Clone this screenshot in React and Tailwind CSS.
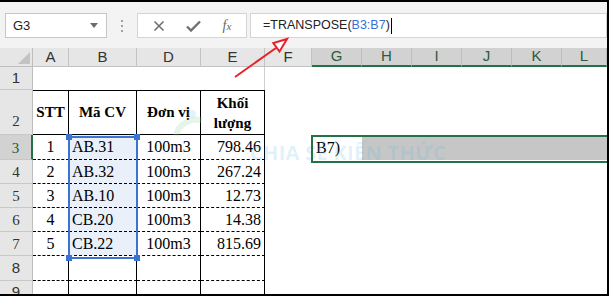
import React from "react";

const serif = { fontFamily: '"Liberation Serif", "Times New Roman", serif' };

const headerCols = [
  { l: "A", w: "w-[36px]" },
  { l: "B", w: "w-[68px]" },
  { l: "D", w: "w-[64px]" },
  { l: "E", w: "w-[64px]" },
  { l: "F", w: "w-[47px]" },
];
const selCols = [
  { l: "G", w: "w-[50px]" },
  { l: "H", w: "w-[50px]" },
  { l: "I", w: "w-[50px]" },
  { l: "J", w: "w-[50px]" },
  { l: "K", w: "w-[50px]" },
  { l: "L", w: "w-[45px]" },
];

const data = [
  { n: 3, stt: "1", ma: "AB.31", dv: "100m3", kl: "798.46", h: "h-[25px]" },
  { n: 4, stt: "2", ma: "AB.32", dv: "100m3", kl: "267.24", h: "h-[24px]" },
  { n: 5, stt: "3", ma: "AB.10", dv: "100m3", kl: "12.73", h: "h-[24px]" },
  { n: 6, stt: "4", ma: "CB.20", dv: "100m3", kl: "14.38", h: "h-[24px]" },
  { n: 7, stt: "5", ma: "CB.22", dv: "100m3", kl: "815.69", h: "h-[24px]" },
];

// cell with solid right edge and dashed bottom edge
const cell = "shrink-0 border-b border-r border-black [border-bottom-style:dashed] ";

function RowHead({ n, active, className = "" }) {
  return (
    <div
      className={
        "w-[33px] shrink-0 flex justify-center items-center border-b border-[#c8c8c8] text-[15px] " +
        (active
          ? "bg-[#d2d2d2] border-r-2 border-r-[#217346] text-[#1f5b36] "
          : "bg-[#e6e6e6] border-r border-r-[#bdbdbd] text-[#333] ") +
        className
      }
    >
      {n}
    </div>
  );
}

export default function App() {
  return (
    <div
      className="relative w-[609px] h-[296px] overflow-hidden bg-white border-t-2 border-r-2 border-b-2 border-black"
      style={{ fontFamily: '"Liberation Sans", Arial, sans-serif' }}
    >
      {/* formula bar */}
      <div className="h-[46px] bg-[#f3f3f3] pt-[11px] flex items-start">
        <div className="ml-[5px] w-[102px] h-[25px] bg-white border border-[#c6c6c6] flex items-center justify-between pl-[7px] pr-[8px] text-[13px] text-[#222]">
          <span>G3</span>
          <svg width="8" height="5" viewBox="0 0 8 5">
            <path d="M0 0 H8 L4 5 Z" fill="#6d6d6d" />
          </svg>
        </div>
        <div className="w-[30px] h-[25px] flex flex-col items-center justify-center gap-[3px]">
          <span className="w-[2px] h-[2px] bg-[#a0a0a0]" />
          <span className="w-[2px] h-[2px] bg-[#a0a0a0]" />
          <span className="w-[2px] h-[2px] bg-[#a0a0a0]" />
        </div>
        <div className="w-[110px] h-[25px] bg-white border border-[#d4d4d4] flex items-center justify-around px-[4px]">
          <svg width="12" height="12" viewBox="0 0 12 12">
            <path d="M1.5 1.5 L10.5 10.5 M10.5 1.5 L1.5 10.5" stroke="#707070" strokeWidth="1.6" />
          </svg>
          <svg width="15" height="12" viewBox="0 0 15 12">
            <path d="M1 6.5 L5 10.5 L14 1.5" stroke="#707070" strokeWidth="2.4" fill="none" />
          </svg>
          <span className="text-[14px] italic text-[#666]" style={serif}>
            f<span className="text-[11px]">x</span>
          </span>
        </div>
        <div className="ml-[3px] flex-1 h-[25px] bg-white border border-[#d4d4d4] flex items-center pl-[12px] text-[12.5px] text-[#222]">
          <span>=TRANSPOSE(</span>
          <span className="text-[#3a6fd1]">B3:B7</span>
          <span>)</span>
          <span className="ml-[1px] w-[1px] h-[16px] bg-black" />
        </div>
      </div>

      {/* column headers */}
      <div className="flex h-[19px]">
        <div className="w-[33px] shrink-0 bg-[#e6e6e6] border-r border-b border-[#bdbdbd] flex items-end justify-end pr-[2px] pb-[2px]">
          <svg width="12" height="12" viewBox="0 0 12 12">
            <path d="M12 0 V12 H0 Z" fill="#c3c3c3" />
          </svg>
        </div>
        {headerCols.map((c) => (
          <div
            key={c.l}
            className={c.w + " shrink-0 bg-[#e6e6e6] border-r border-b border-[#c3c3c3] flex items-center justify-center text-[15px] text-[#333]"}
          >
            {c.l}
          </div>
        ))}
        {selCols.map((c) => (
          <div
            key={c.l}
            className={c.w + " shrink-0 bg-[#d2d2d2] border-r border-r-[#bdbdbd] border-b-2 border-b-[#217346] flex items-center justify-center text-[15px] text-[#2b5c3d]"}
          >
            {c.l}
          </div>
        ))}
      </div>

      {/* row 1 */}
      <div className="flex h-[23px]">
        <RowHead n="1" />
        <div className="w-[36px] shrink-0" />
        <div className="w-[68px] shrink-0" />
        <div className="w-[64px] shrink-0" />
        <div className="w-[64px] shrink-0 border-r border-[#cfcfcf]" />
      </div>

      {/* row 2 */}
      <div className="flex h-[45px]" style={serif}>
        <RowHead n="2" className="!items-end pb-[2px]" />
        <div className="w-[36px] shrink-0 border-y border-r border-black flex items-center justify-center text-[15px] font-bold">STT</div>
        <div className="w-[68px] shrink-0 border-y border-r border-black flex items-center justify-center text-[15px] font-bold">Mã CV</div>
        <div className="w-[64px] shrink-0 border-y border-r border-black flex items-center justify-center text-[15px] font-bold">Đơn vị</div>
        <div className="w-[64px] shrink-0 border-y border-r border-black flex items-center justify-center text-center text-[15px] font-bold leading-[20px]">
          Khối
          <br />
          lượng
        </div>
      </div>

      {/* data rows */}
      {data.map((r) => (
        <div key={r.n} className={"flex " + r.h} style={serif}>
          <RowHead n={r.n} active={r.n === 3} className="pt-[2px]" />
          <div className={cell + "w-[36px] flex items-center justify-center text-[16px]"}>{r.stt}</div>
          <div className={cell + "w-[68px] bg-[#e9f0fa] flex items-center pl-[3px] text-[16px]"}>{r.ma}</div>
          <div className={cell + "w-[64px] flex items-center justify-center text-[16px]"}>{r.dv}</div>
          <div className={cell + "w-[64px] flex items-center justify-end pr-[3px] text-[16px]"}>{r.kl}</div>
          {r.n === 3 && (
            <>
              <div className="w-[47px] shrink-0" />
              <div className="w-[50px] shrink-0 flex items-center pl-[4px] text-[16px]">B7)</div>
              <div className="flex-1 bg-[#c6c6c6]" />
            </>
          )}
        </div>
      ))}

      {/* rows 8 and 9 */}
      <div className="flex h-[25px]">
        <RowHead n="8" />
        <div className={cell + "w-[36px]"} />
        <div className={cell + "w-[68px]"} />
        <div className={cell + "w-[64px]"} />
        <div className={cell + "w-[64px]"} />
      </div>
      <div className="flex h-[24px]">
        <RowHead n="9" />
        <div className="w-[36px] shrink-0 border-r border-black" />
        <div className="w-[68px] shrink-0 border-r border-black" />
        <div className="w-[64px] shrink-0 border-r border-black" />
        <div className="w-[64px] shrink-0 border-r border-black" />
      </div>

      {/* watermark */}
      <div className="absolute left-[250px] top-[136px] text-[20px] font-bold tracking-[0.3px] text-[#5fb6e6]/20 pointer-events-none" style={{ fontFamily: '"Open Sans", "Liberation Sans", sans-serif' }}>
        CHIA SẺ KIẾN THỨC
      </div>
      <svg className="absolute left-[168px] top-[104px] pointer-events-none" width="40" height="40" viewBox="0 0 40 40">
        <path d="M8 30 C10 18 22 12 34 14" stroke="#9ed8a8" strokeOpacity="0.25" strokeWidth="6" fill="none" />
        <circle cx="24" cy="8" r="4" fill="#8fd0e8" fillOpacity="0.25" />
      </svg>

      {/* blue selection B3:B7 */}
      <div className="absolute left-[68px] top-[134px] w-[70px] h-[123px] border-2 border-[#3c73d0] pointer-events-none">
        <span className="absolute -left-[4px] -top-[4px] w-[6px] h-[6px] bg-[#3c73d0]" />
        <span className="absolute -right-[4px] -top-[4px] w-[6px] h-[6px] bg-[#3c73d0]" />
        <span className="absolute -left-[4px] -bottom-[4px] w-[6px] h-[6px] bg-[#3c73d0]" />
        <span className="absolute -right-[4px] -bottom-[4px] w-[6px] h-[6px] bg-[#3c73d0]" />
      </div>

      {/* green selection G3 */}
      <div className="absolute left-[311px] top-[133px] w-[300px] h-[28px] border-2 border-[#217346] pointer-events-none" />

      {/* red arrow */}
      <svg className="absolute left-0 top-0 pointer-events-none" width="609" height="296">
        <line x1="235" y1="75" x2="276" y2="46" stroke="#e8202a" strokeWidth="2" />
        <polygon points="287,37 279.5,49.5 273.3,41" fill="white" stroke="#e8202a" strokeWidth="2" strokeLinejoin="miter" />
      </svg>
    </div>
  );
}
